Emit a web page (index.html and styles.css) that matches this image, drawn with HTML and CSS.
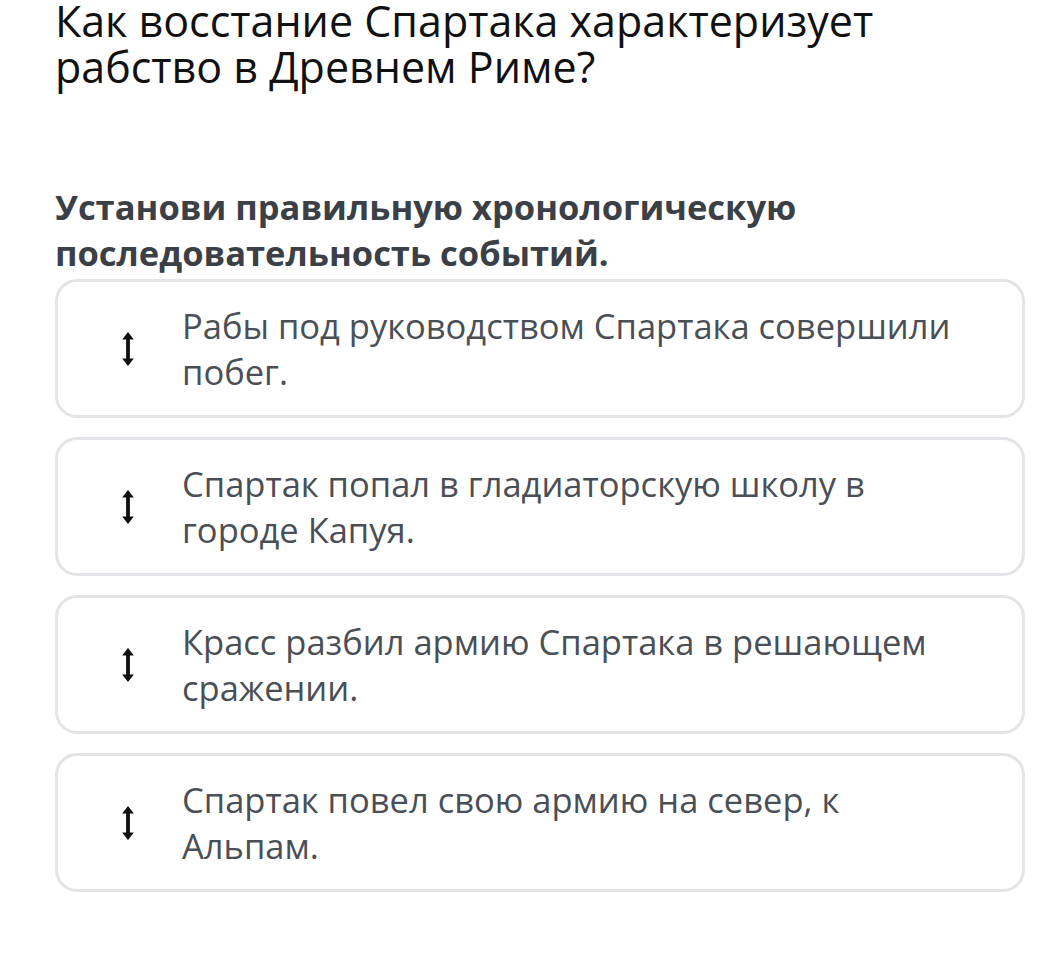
FILE: index.html
```html
<!DOCTYPE html>
<html lang="ru">
<head>
<meta charset="utf-8">
<link rel="stylesheet" href="styles.css">
</head>
<body>
<main class="page">
  <h1 class="title">Как восстание Спартака характеризует рабство в Древнем Риме?</h1>
  <h2 class="subtitle">Установи правильную хронологическую последовательность событий.</h2>
  <ul class="list">
    <li class="card">
      <span class="handle"><svg width="12" height="34" viewBox="0 0 12 34"><path d="M6 0 L11.8 7.5 L7.9 7.5 L7.9 26.5 L11.8 26.5 L6 34 L0.2 26.5 L4.1 26.5 L4.1 7.5 L0.2 7.5 Z" fill="#111"/></svg></span>
      <span class="text">Рабы под руководством Спартака совершили побег.</span>
    </li>
    <li class="card">
      <span class="handle"><svg width="12" height="34" viewBox="0 0 12 34"><path d="M6 0 L11.8 7.5 L7.9 7.5 L7.9 26.5 L11.8 26.5 L6 34 L0.2 26.5 L4.1 26.5 L4.1 7.5 L0.2 7.5 Z" fill="#111"/></svg></span>
      <span class="text">Спартак попал в гладиаторскую школу в городе Капуя.</span>
    </li>
    <li class="card">
      <span class="handle"><svg width="12" height="34" viewBox="0 0 12 34"><path d="M6 0 L11.8 7.5 L7.9 7.5 L7.9 26.5 L11.8 26.5 L6 34 L0.2 26.5 L4.1 26.5 L4.1 7.5 L0.2 7.5 Z" fill="#111"/></svg></span>
      <span class="text">Красс разбил армию Спартака в решающем сражении.</span>
    </li>
    <li class="card">
      <span class="handle"><svg width="12" height="34" viewBox="0 0 12 34"><path d="M6 0 L11.8 7.5 L7.9 7.5 L7.9 26.5 L11.8 26.5 L6 34 L0.2 26.5 L4.1 26.5 L4.1 7.5 L0.2 7.5 Z" fill="#111"/></svg></span>
      <span class="text">Спартак повел свою армию на север, к Альпам.</span>
    </li>
  </ul>
</main>
</body>
</html>
```

FILE: styles.css
```css
html, body {
  margin: 0;
  padding: 0;
  background: #ffffff;
}
body {
  font-family: "Open Sans", "Liberation Sans", sans-serif;
}
.page {
  padding: 0 17px 0 55px;
}
.title {
  margin: -2px 0 0;
  max-width: 920px;
  font-size: 43px;
  line-height: 46px;
  font-weight: 400;
  color: #111111;
}
.subtitle {
  margin: 94px 0 3px;
  font-size: 34.5px;
  line-height: 46px;
  font-weight: 700;
  color: #3b4047;
}
.list {
  list-style: none;
  margin: 0;
  padding: 0;
  display: flex;
  flex-direction: column;
  gap: 19px;
}
.card {
  display: flex;
  align-items: center;
  min-height: 139px;
  box-sizing: border-box;
  border: 3px solid #e2e4e7;
  border-radius: 22px;
  padding: 20px 57px 20px 64px;
}
.handle {
  flex: none;
  width: 12px;
  display: flex;
  align-items: center;
  margin-right: 48px;
}
.text {
  font-size: 34.5px;
  line-height: 46px;
  color: #4a4f56;
}
```
